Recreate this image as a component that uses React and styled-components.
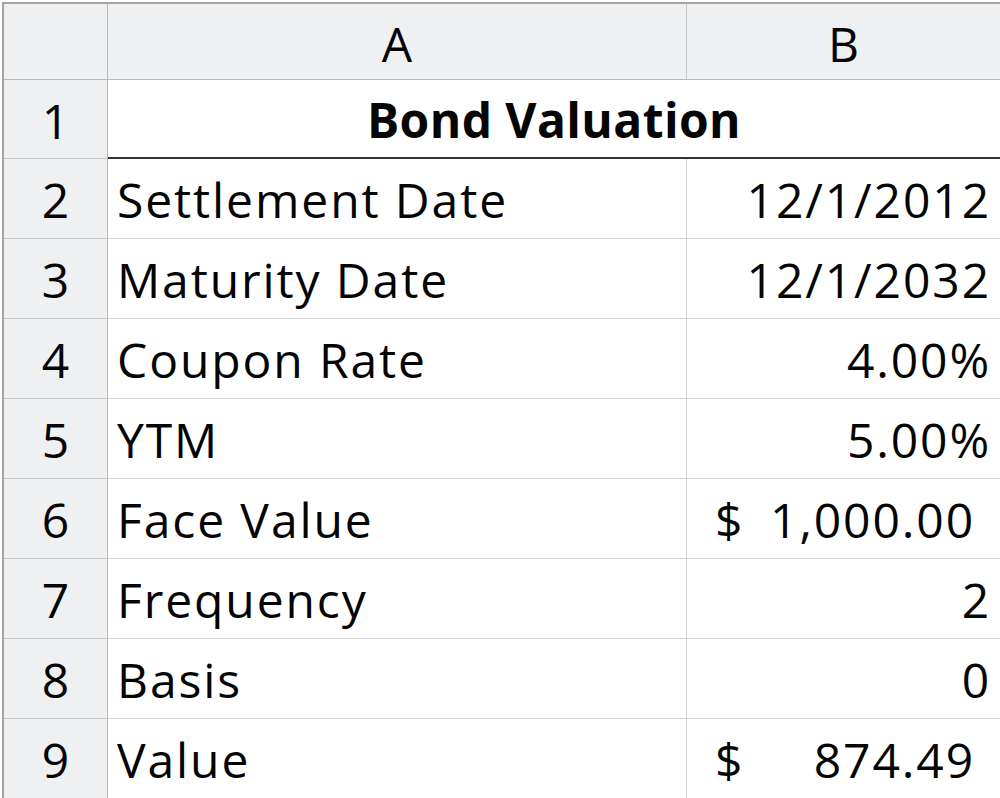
import styled, { createGlobalStyle } from "styled-components";

const GlobalStyle = createGlobalStyle`
  body {
    margin: 0;
    background: #ffffff;
    font-family: "Open Sans", "Noto Sans", sans-serif;
    color: #050505;
  }
`;

const rows = [
  { n: 2, label: "Settlement Date", value: "12/1/2012" },
  { n: 3, label: "Maturity Date", value: "12/1/2032" },
  { n: 4, label: "Coupon Rate", value: "4.00%" },
  { n: 5, label: "YTM", value: "5.00%" },
  { n: 6, label: "Face Value", money: "1,000.00" },
  { n: 7, label: "Frequency", value: "2" },
  { n: 8, label: "Basis", value: "0" },
  { n: 9, label: "Value", money: "874.49" },
];

const App = () => {
  return (
    <>
      <GlobalStyle />
      <Sheet>
        <Corner />
        <ColHeader $divider>A</ColHeader>
        <ColHeader>B</ColHeader>

        <RowHeader>1</RowHeader>
        <TitleCell>Bond Valuation</TitleCell>

        {rows.map((r) => (
          <Row key={r.n}>
            <RowHeader>{r.n}</RowHeader>
            <Cell $divider>{r.label}</Cell>
            {r.money ? (
              <MoneyCell>
                <Dollar>$</Dollar>
                <Amount>{r.money}</Amount>
              </MoneyCell>
            ) : (
              <Cell $align="flex-end">{r.value}</Cell>
            )}
          </Row>
        ))}
      </Sheet>
    </>
  );
};

export default App;

const Sheet = styled.div`
  display: grid;
  grid-template-columns: 104px 579px 1fr;
  grid-template-rows: 76px 79px repeat(8, 80px);
  margin: 2px 0 0 2px;
  border-top: 2px solid #a4a4a4;
  border-left: 2px solid #a4a4a4;
  font-size: 48px;
  font-weight: 500;
  letter-spacing: 1.9px;

  & > * {
    box-sizing: border-box;
  }
`;

const Row = styled.div`
  display: contents;
`;

const headerBg = "#eff0f2";

const Corner = styled.div`
  background: ${headerBg};
  border-right: 1px solid #b9b9b9;
  border-bottom: 1px solid #b9b9b9;
`;

const ColHeader = styled.div`
  background: ${headerBg};
  border-bottom: 1px solid #b9b9b9;
  border-right: ${(p) => (p.$divider ? "1px solid #c9c9c9" : "none")};
  display: flex;
  align-items: center;
  justify-content: center;
  padding-top: 4px;
  letter-spacing: 0;
`;

const RowHeader = styled.div`
  box-sizing: border-box;
  background: ${headerBg};
  border-right: 1px solid #b9b9b9;
  border-bottom: 1px solid #c6c6c6;
  display: flex;
  align-items: center;
  justify-content: center;
  letter-spacing: 0;
  padding-top: 2px;
`;

const TitleCell = styled.div`
  grid-column: span 2;
  border-bottom: 2px solid #333333;
  display: flex;
  align-items: center;
  justify-content: center;
  font-weight: 700;
  letter-spacing: 0.4px;
  padding-top: 2px;
`;

const Cell = styled.div`
  box-sizing: border-box;
  border-bottom: 1px solid #d4d4d4;
  border-right: ${(p) => (p.$divider ? "1px solid #d4d4d4" : "none")};
  display: flex;
  align-items: center;
  justify-content: ${(p) => p.$align || "flex-start"};
  padding: 2px 9px 0 9px;
  white-space: nowrap;
`;

const MoneyCell = styled.div`
  box-sizing: border-box;
  border-bottom: 1px solid #d4d4d4;
  display: flex;
  align-items: center;
  justify-content: space-between;
  padding: 2px 25px 0 28px;
`;

const Dollar = styled.span``;

const Amount = styled.span``;
